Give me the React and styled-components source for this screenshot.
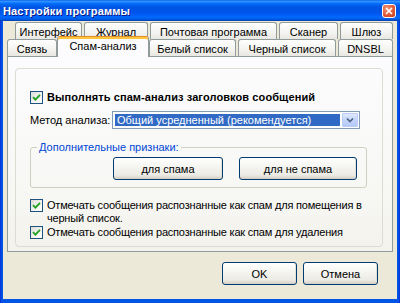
import React from "react";
import styled, { createGlobalStyle } from "styled-components";

const Global = createGlobalStyle`
  html, body { margin: 0; padding: 0; background: #ece9d8; }
  body { font-family: "Liberation Sans", Arial, sans-serif; font-size: 11px; color: #000; }
  * { box-sizing: border-box; }
`;

const Window = styled.div`
  width: 400px;
  height: 303px;
  display: flex;
  flex-direction: column;
  background: linear-gradient(to right, #0831d9 0, #0055e5 2px, #0055e5 calc(100% - 2px), #0831d9 100%);
  overflow: hidden;
`;

const TitleBar = styled.div`
  height: 21px;
  flex: none;
  display: flex;
  align-items: center;
  justify-content: space-between;
  padding: 0 4px 0 3px;
  background: linear-gradient(to bottom, #0058ee 0%, #3593ff 5%, #288eff 9%, #127dff 13%, #036ffc 17%, #0262ee 24%, #0057e5 32%, #0054e3 40%, #0055eb 60%, #005bf5 70%, #026afe 80%, #0062ef 88%, #0052d6 94%, #0040ab 100%);
`;

const Title = styled.span`
  font-family: "Liberation Sans", Arial, sans-serif;
  font-weight: bold;
  font-size: 11px;
  color: #fff;
  text-shadow: 1px 1px 0 #0a1883;
  letter-spacing: 0.15px;
`;

const CloseButton = styled.div`
  width: 14px;
  height: 14px;
  border: 1px solid #fff;
  border-radius: 3px;
  background: radial-gradient(circle at 35% 30%, #f09a7c 0%, #e2643f 45%, #c33b17 100%);
  display: flex;
  align-items: center;
  justify-content: center;
`;

const Client = styled.div`
  flex: 1;
  margin: 0 3px 4px 3px;
  background: #ece9d8;
  padding: 1px 4px 0 4px;
  display: flex;
  flex-direction: column;
`;

const TabStrip = styled.div`
  display: flex;
  flex-direction: column;
`;

const TabRow = styled.div`
  display: flex;
  align-items: flex-end;
  gap: 2px;
  height: 17px;
  padding-left: ${(p) => p.$offset || 0}px;
`;

const Tab = styled.div`
  width: ${(p) => p.$w}px;
  height: 17px;
  flex: none;
  border: 1px solid #919b9c;
  border-bottom: none;
  border-radius: 3px 3px 0 0;
  background: linear-gradient(to bottom, #ffffff 0%, #f3f3f0 60%, #e8e7e1 100%);
  display: flex;
  align-items: center;
  justify-content: center;
  padding-top: 1px;
  white-space: nowrap;
`;

const ActiveTab = styled(Tab)`
  height: 21px;
  margin: 0 -2px -1px -2px;
  position: relative;
  z-index: 2;
  background: #fcfcfe;
  border-top: 1px solid #e68b2c;
  box-shadow: inset 0 2px 0 #ffc83c;
  align-items: flex-start;
  padding-top: 3px;
`;

const Panel = styled.div`
  height: 196px;
  border: 1px solid #919b9c;
  background: linear-gradient(to bottom, #fcfcfe 0%, #f7f7f4 70%, #f3f2ec 100%);
  padding: 11px 9px 4px 7px;
  position: relative;
  z-index: 1;
`;

const Inner = styled.div`
  height: 179px;
  border: 1px solid #dddcd2;
  border-radius: 4px;
  padding: 22px 10px 0 14px;
  display: flex;
  flex-direction: column;
`;

const CheckRow = styled.label`
  display: flex;
  align-items: ${(p) => (p.$top ? "flex-start" : "center")};
  gap: 4px;
  margin-top: ${(p) => p.$mt || 0}px;
  line-height: 13px;
  white-space: nowrap;
  font-weight: ${(p) => (p.$bold ? "bold" : "normal")};
  letter-spacing: ${(p) => (p.$bold ? "0.1px" : "-0.2px")};
`;

const Box = styled.span`
  width: 13px;
  height: 13px;
  flex: none;
  border: 1px solid #1c5180;
  background: linear-gradient(135deg, #dcdcd7 0%, #f5f5f2 60%, #ffffff 100%);
  display: flex;
  align-items: center;
  justify-content: center;
`;

const MethodRow = styled.div`
  display: flex;
  align-items: center;
  margin-top: 7px;
`;

const Label = styled.span`
  width: 82px;
  flex: none;
`;

const Select = styled.div`
  width: 248px;
  height: 18px;
  border: 1px solid #7f9db9;
  background: #fff;
  display: flex;
  align-items: stretch;
  padding: 1px;
`;

const SelectValue = styled.div`
  flex: 1;
  margin: 1px 2px 1px 1px;
  background: #316ac5;
  color: #fff;
  padding-left: 2px;
  display: flex;
  align-items: center;
  white-space: nowrap;
  overflow: hidden;
`;

const DropButton = styled.div`
  width: 16px;
  flex: none;
  border: 1px solid #b9cdf8;
  border-radius: 1px;
  background: linear-gradient(to bottom, #dfe8fd 0%, #c4d5fb 50%, #b4c8f6 100%);
  display: flex;
  align-items: center;
  justify-content: center;
`;

const Group = styled.fieldset`
  margin: 13px 0 0 0;
  width: 337px;
  height: 46px;
  border: 1px solid #d0d0bf;
  border-radius: 3px;
  padding: 0 0 0 82px;
  display: flex;
  gap: 16px;
  align-items: flex-start;
`;

const Legend = styled.legend`
  color: #0046d5;
  padding: 0 2px 0 2px;
  margin-left: -76px;
  line-height: 11px;
  margin-bottom: 4px;
`;

const Button = styled.button`
  width: ${(p) => p.$w}px;
  height: 23px;
  flex: none;
  font-family: "Liberation Sans", Arial, sans-serif;
  font-size: 11px;
  color: #000;
  border: 1px solid #003c74;
  border-radius: 3px;
  background: linear-gradient(to bottom, #ffffff 0%, #f4f4f0 45%, #ecebe5 80%, #d6d0c5 100%);
  box-shadow: inset 0 -1px 0 #d6d0c5, inset -1px 0 0 #e3e0d6;
  padding: 0;
`;

const Footer = styled.div`
  display: flex;
  justify-content: flex-end;
  gap: 6px;
  padding: 10px 15px 0 0;
`;

const Check = () => (
  <svg width="9" height="9" viewBox="0 0 9 9">
    <path d="M1 4.2 L3.4 6.6 L8 1.8" fill="none" stroke="#21a121" strokeWidth="1.8" />
  </svg>
);

export default function App() {
  return (
    <>
      <Global />
      <Window>
        <TitleBar>
          <Title>Настройки программы</Title>
          <CloseButton>
            <svg width="8" height="8" viewBox="0 0 8 8">
              <path d="M1 1 L7 7 M7 1 L1 7" stroke="#fff" strokeWidth="1.6" />
            </svg>
          </CloseButton>
        </TitleBar>
        <Client>
          <TabStrip>
            <TabRow $offset={8}>
              <Tab $w={67}>Интерфейс</Tab>
              <Tab $w={64}>Журнал</Tab>
              <Tab $w={127}>Почтовая программа</Tab>
              <Tab $w={59}>Сканер</Tab>
              <Tab $w={53}>Шлюз</Tab>
            </TabRow>
            <TabRow>
              <Tab $w={50}>Связь</Tab>
              <ActiveTab $w={92}>Спам-анализ</ActiveTab>
              <Tab $w={87}>Белый список</Tab>
              <Tab $w={98}>Черный список</Tab>
              <Tab $w={55}>DNSBL</Tab>
            </TabRow>
          </TabStrip>
          <Panel>
            <Inner>
              <CheckRow $bold>
                <Box><Check /></Box>
                Выполнять спам-анализ заголовков сообщений
              </CheckRow>
              <MethodRow>
                <Label>Метод анализа:</Label>
                <Select>
                  <SelectValue>Общий усредненный (рекомендуется)</SelectValue>
                  <DropButton>
                    <svg width="8" height="6" viewBox="0 0 8 6">
                      <path d="M1 1.5 L4 4.5 L7 1.5" fill="none" stroke="#4d6185" strokeWidth="1.6" />
                    </svg>
                  </DropButton>
                </Select>
              </MethodRow>
              <Group>
                <Legend>Дополнительные признаки:</Legend>
                <Button $w={110}>для спама</Button>
                <Button $w={118}>для не спама</Button>
              </Group>
              <CheckRow $top $mt={11}>
                <Box><Check /></Box>
                <span>
                  Отмечать сообщения распознанные как спам для помещения в
                  <br />
                  черный список.
                </span>
              </CheckRow>
              <CheckRow $mt={1}>
                <Box><Check /></Box>
                Отмечать сообщения распознанные как спам для удаления
              </CheckRow>
            </Inner>
          </Panel>
          <Footer>
            <Button $w={75}>OK</Button>
            <Button $w={75}>Отмена</Button>
          </Footer>
        </Client>
      </Window>
    </>
  );
}
